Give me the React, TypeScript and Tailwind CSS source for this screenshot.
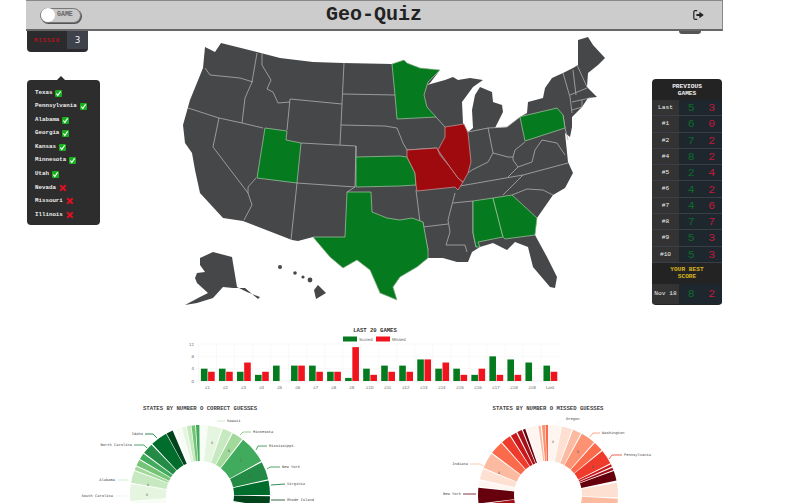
import React from "react";

type Game = { label: string; scored: number; missed: number };

const guesses = [
  { name: "Texas", ok: true },
  { name: "Pennsylvania", ok: true },
  { name: "Alabama", ok: true },
  { name: "Georgia", ok: true },
  { name: "Kansas", ok: true },
  { name: "Minnesota", ok: true },
  { name: "Utah", ok: true },
  { name: "Nevada", ok: false },
  { name: "Missouri", ok: false },
  { name: "Illinois", ok: false },
];

const previous: Game[] = [
  { label: "Last", scored: 5, missed: 3 },
  { label: "#1", scored: 6, missed: 0 },
  { label: "#2", scored: 7, missed: 2 },
  { label: "#4", scored: 8, missed: 2 },
  { label: "#5", scored: 2, missed: 4 },
  { label: "#6", scored: 4, missed: 2 },
  { label: "#7", scored: 4, missed: 6 },
  { label: "#8", scored: 7, missed: 7 },
  { label: "#9", scored: 5, missed: 3 },
  { label: "#10", scored: 5, missed: 3 },
];

const scored = [4, 4, 3, 2, 5, 5, 5, 3, 1, 4, 5, 5, 7, 4, 4, 2, 8, 7, 6, 5];
const missed = [3, 3, 6, 3, 0, 5, 3, 3, 11, 2, 3, 3, 7, 6, 2, 4, 2, 2, 0, 3];

const GREEN = "#067a1e";
const RED = "#9f0a0e";

const utah = "265,128 287,131 286,140 301,143 297,183 257,178";
const texas =
  "347,192 371,192 372,212 387,218 400,220 412,218 423,222 428,250 428,258 417,267 400,277 393,287 397,300 380,293 370,270 357,260 343,268 330,257 313,237 345,237";
const kansas = "356,157 400,156 407,157 415,173 416,185 400,186 356,187";
const missouri = "407,150 437,148 440,155 450,167 458,178 463,182 458,190 455,187 417,191 416,185 415,173 407,157";
const illinois = "445,127 464,124 468,133 471,162 468,173 463,182 458,178 450,167 438,150 445,137";
const minnesota = "392,64 404,60 407,63 420,68 440,70 428,82 424,95 427,107 436,117 397,119 395,95";
const alabama = "473,201 493,198 503,237 478,242 480,247 476,247 473,233";
const georgia = "493,198 512,195 537,218 535,235 505,239 503,237";
const pennsylvania = "520,117 523,116 557,108 563,115 565,128 525,141";

const usa =
  "221,43 257,52 280,58 313,62 343,63 392,64 404,60 407,63 420,68 440,70 430,83 427,85 445,80 453,77 458,80 470,78 483,80 473,87 462,102 463,123 468,132 473,128 472,110 475,95 480,87 492,92 493,102 502,105 503,112 498,122 495,128 507,127 520,117 527,113 528,102 543,98 545,88 552,78 563,73 573,68 578,65 578,40 588,37 593,45 605,58 598,65 588,73 587,87 597,97 588,98 582,107 572,117 572,127 570,137 565,133 568,162 573,173 565,188 553,195 537,218 535,235 547,257 557,277 555,288 550,287 533,267 528,247 515,242 507,250 493,243 480,247 472,252 468,262 457,262 443,258 428,258 417,267 400,277 393,287 397,300 380,293 370,270 357,260 343,268 330,257 313,237 298,241 292,240 243,221 223,218 200,193 195,170 192,153 185,143 183,125 190,100 203,68 205,47 215,52";

const lines = [
  "205,68 210,75 240,78 253,82",
  "257,53 252,82 245,98 242,123",
  "188,108 219,118 242,123 263,128",
  "219,118 213,147 248,193 252,205 244,220",
  "256,178 248,187 248,193",
  "297,183 291,240",
  "301,143 356,146 355,187 297,183",
  "355,187 347,192",
  "262,53 262,65 271,80 267,89 273,92 278,103 290,102",
  "290,99 342,104",
  "344,63 342,104 340,145",
  "290,99 287,130",
  "343,94 395,95",
  "341,125 385,126 397,128 403,143 407,150 410,156",
  "356,146 356,157",
  "416,190 420,222",
  "436,117 445,127",
  "407,150 437,148",
  "423,227 448,224",
  "455,193 448,220 450,232 446,245 465,245 467,252",
  "453,203 473,201 473,233 476,247",
  "423,222 423,227 428,250",
  "460,186 523,175 568,163",
  "503,195 523,175",
  "512,195 527,189 543,190 553,195",
  "468,173 472,170 488,162 493,153 508,157 513,157",
  "508,177 518,167 513,160 513,157 515,150 525,142",
  "518,167 532,162 535,150 542,140 557,143 565,155",
  "488,128 493,153",
  "468,132 488,128 507,127",
  "507,127 520,117",
  "563,115 565,128 568,140",
  "563,73 570,97 572,113",
  "573,70 576,95",
  "577,65 587,87",
  "570,95 587,88",
  "572,102 590,98",
  "582,100 582,107",
  "572,110 582,107",
];

const alaska =
  "200,258 213,252 232,257 237,287 247,292 260,297 258,299 245,288 233,288 223,287 213,298 197,303 185,305 200,297 208,293 197,283 195,278 197,273 205,272 200,265";

const greenLeft = [
  [0, 6, "#f7fcf5"], [6.5, 18, "#e5f5e0"], [19, 27, "#c7e9c0"], [28, 37, "#a1d99b"], [38, 61, "#41ab5d"],
  [62, 77, "#238b45"], [78, 90, "#006d2c"], [91, 100, "#00441b"], [101, 130, "#e5f5e0"], [230, 264, "#f7fcf5"], [265, 279, "#e5f5e0"],
  [280, 290, "#c7e9c0"], [291, 294, "#a1d99b"], [295, 300, "#74c476"], [301, 306, "#41ab5d"], [307, 316, "#238b45"],
  [317, 331, "#006d2c"], [331.5, 337, "#00441b"], [340, 344.5, "#f7fcf5"], [345, 348.4, "#e5f5e0"], [349, 352.5, "#c7e9c0"],
  [353, 356, "#74c476"], [356.7, 359.5, "#41ab5d"],
] as const;

const redRight = [
  [0, 11, "#fff5f0"], [11.5, 20, "#fee0d2"], [21, 28, "#fcbba1"], [29, 41, "#fc9272"], [42, 50, "#fb6a4a"],
  [51, 63, "#ef3b2c"], [64, 66, "#cb181d"], [67, 69, "#a50f15"], [70, 78, "#67000d"], [80, 92, "#fee0d2"], [93, 130, "#fcbba1"],
  [230, 262, "#a50f15"], [263, 276, "#67000d"], [277, 282, "#fff5f0"], [283, 292, "#fee0d2"], [293, 306, "#fcbba1"],
  [307, 318, "#fb6a4a"], [319, 327, "#ef3b2c"], [328, 333, "#cb181d"], [334, 338, "#a50f15"], [339, 341, "#67000d"],
  [342, 351, "#fff5f0"], [352, 354, "#fcbba1"], [355, 357.5, "#fc9272"], [358, 360, "#fb6a4a"],
] as const;

function slice(cx: number, cy: number, a0: number, a1: number) {
  const p = (r: number, a: number) => {
    const t = (a * Math.PI) / 180;
    return `${(cx + r * Math.sin(t)).toFixed(2)} ${(cy - r * Math.cos(t)).toFixed(2)}`;
  };
  const big = a1 - a0 > 180 ? 1 : 0;
  return `M${p(70, a0)}A70 70 0 ${big} 1 ${p(70, a1)}L${p(34, a1)}A34 34 0 ${big} 0 ${p(34, a0)}Z`;
}

type Label = { text: string; x: number; y: number; anchor?: "start" | "end"; line: string; color: string };
type Count = { n: number; x: number; y: number };

const greenLabels: Label[] = [
  { text: "Hawaii", x: 227, y: 422, line: "217,421 225,421", color: "#c7e9c0" },
  { text: "Minnesota", x: 253, y: 433, line: "240,435 243,432 251,432", color: "#74c476" },
  { text: "Mississippi", x: 269, y: 447, line: "256,450 258,446 267,446", color: "#238b45" },
  { text: "New York", x: 282, y: 468, line: "267,469 270,467 280,467", color: "#238b45" },
  { text: "Virginia", x: 287, y: 485, line: "271,485 285,484", color: "#006d2c" },
  { text: "Rhode Island", x: 287, y: 501, line: "271,500 285,500", color: "#00441b" },
  { text: "Idaho", x: 143, y: 435, anchor: "end", line: "145,434 153,434 157,438", color: "#006d2c" },
  { text: "North Carolina", x: 132, y: 446, anchor: "end", line: "134,445 144,445 147,448", color: "#238b45" },
  { text: "Alabama", x: 115, y: 481, anchor: "end", line: "118,480 128,480", color: "#c7e9c0" },
  { text: "South Carolina", x: 113, y: 497, anchor: "end", line: "116,496 127,496", color: "#e5f5e0" },
];

const redLabels: Label[] = [
  { text: "Oregon", x: 566, y: 420, line: "556,424 564,420", color: "#fff5f0" },
  { text: "Washington", x: 602, y: 434, line: "590,437 593,433 600,433", color: "#fc9272" },
  { text: "Pennsylvania", x: 624, y: 456, line: "609,459 612,455 622,455", color: "#ef3b2c" },
  { text: "Indiana", x: 468, y: 465, anchor: "end", line: "470,464 480,464 483,466", color: "#fcbba1" },
  { text: "New York", x: 461, y: 495, anchor: "end", line: "463,494 476,494", color: "#67000d" },
];

const greenCounts: Count[] = [
  { n: 3, x: 212, y: 444 },
  { n: 5, x: 229, y: 452 },
  { n: 7, x: 241, y: 462 },
  { n: 8, x: 250, y: 477 },
  { n: 4, x: 148, y: 486 },
  { n: 3, x: 147, y: 496 },
];

const redCounts: Count[] = [
  { n: 3, x: 553, y: 443 },
  { n: 5, x: 578, y: 453 },
  { n: 6, x: 593, y: 468 },
  { n: 4, x: 499, y: 474 },
];

function Donut({
  x0,
  cx,
  slices,
  labels,
  counts,
}: {
  x0: number;
  cx: number;
  slices: readonly (readonly [number, number, string])[];
  labels: Label[];
  counts: Count[];
}) {
  return (
    <svg viewBox={`${x0} 414 348 89`} className="w-[348px] h-[89px] block" textRendering="geometricPrecision">
      {slices.map(([a, b, color]) => (
        <path key={a} d={slice(cx, 495, a, b)} fill={color} />
      ))}
      {counts.map((c) => (
        <text key={c.x} x={c.x} y={c.y} fontSize="3.8" textAnchor="middle" fill="#555">
          {c.n}
        </text>
      ))}
      {labels.map((l) => (
        <g key={l.text}>
          <polyline points={l.line} fill="none" stroke={l.color} strokeWidth="0.8" />
          <text x={l.x} y={l.y} textAnchor={l.anchor ?? "start"} fontSize="3.75" fill="#444">
            {l.text}
          </text>
        </g>
      ))}
    </svg>
  );
}

const BarChart = () => (
  <svg
    viewBox="180 336 390 58"
    className="w-[390px] h-[58px] block [font-family:'Liberation_Sans',sans-serif]"
    textRendering="geometricPrecision"
  >
    <rect x="343" y="336.5" width="14" height="5" fill={GREEN} />
    <text x="359" y="340.5" fontSize="4.3" fill="#666">Scored</text>
    <rect x="376" y="336.5" width="14" height="5" fill="#f0141e" />
    <text x="392" y="340.5" fontSize="4.3" fill="#666">Missed</text>
    {[344, 356.3, 368.7, 381].map((y, i) => (
      <g key={y}>
        <line x1="196" x2="560" y1={y} y2={y} stroke={i === 3 ? "#ddd" : "#f0f0f0"} strokeWidth="0.5" />
        <text x="194" y={y + 1.5} fontSize="4.4" textAnchor="end" fill="#666">{12 - i * 4}</text>
      </g>
    ))}
    {scored.map((s, i) => {
      const x = 198.5 + i * 18.03;
      const m = missed[i];
      return (
        <g key={i}>
          <line x1={x} x2={x} y1="344" y2="383" stroke="#f3f3f3" strokeWidth="0.5" />
          <rect x={x + 2.4} y={381 - s * 3.08} width="6.6" height={s * 3.08} fill={GREEN} />
          <rect x={x + 9.6} y={381 - m * 3.08} width="6.6" height={m * 3.08} fill="#f0141e" />
          <text x={x + 9} y="388.5" fontSize="4.4" textAnchor="middle" fill="#666">
            {i === 19 ? "Last" : `#${i + 1}`}
          </text>
        </g>
      );
    })}
  </svg>
);

const UsaMap = () => (
  <svg viewBox="180 35 430 270" className="w-[430px] h-[270px] block shrink-0">
    <polygon points={usa} fill="#464749" />
    <polygon points={alaska} fill="#464749" />
    <polygon points="318,285 326,293 316,299 314,290" fill="#464749" />
    <circle cx="280" cy="267" r="2" fill="#464749" />
    <circle cx="295" cy="273" r="1.8" fill="#464749" />
    <circle cx="303" cy="277" r="1.6" fill="#464749" />
    <circle cx="310" cy="280" r="2.4" fill="#464749" />
    <g fill="none" stroke="#aeaeae" strokeWidth="0.8">
      {lines.map((l) => (
        <polyline key={l} points={l} />
      ))}
    </g>
    <g stroke="#a9c7a9" strokeWidth="0.7">
      {[utah, texas, kansas, minnesota, alabama, georgia, pennsylvania].map((p) => (
        <polygon key={p} points={p} fill={GREEN} />
      ))}
    </g>
    <g stroke="#c9a0a0" strokeWidth="0.7">
      {[missouri, illinois].map((p) => (
        <polygon key={p} points={p} fill={RED} />
      ))}
    </g>
  </svg>
);

const SignOut = () => (
  <svg viewBox="0 0 11 10" className="w-[11px] h-[10px] shrink-0">
    <path d="M4.2 .7H2a1.2 1.2 0 0 0-1.2 1.2v6.2A1.2 1.2 0 0 0 2 9.3h2.2" fill="none" stroke="#222" strokeWidth="1.2" />
    <path d="M3.4 3.9h3V1.8L10.8 5 6.4 8.2V6.1h-3z" fill="#222" />
  </svg>
);

const Mark = ({ ok }: { ok: boolean }) =>
  ok ? (
    <span className="w-[7px] h-[7px] rounded-[1px] bg-[#17b01d] flex items-center justify-center">
      <svg viewBox="0 0 10 10" className="w-[7px] h-[7px]">
        <path d="M2 5l2 3 4-6" fill="none" stroke="#fff" strokeWidth="1.6" />
      </svg>
    </span>
  ) : (
    <svg viewBox="0 0 10 10" className="w-[8px] h-[8px]">
      <path d="M1.5 1.5l7 7M8.5 1.5l-7 7" stroke="#e01020" strokeWidth="2.4" />
    </svg>
  );

const ScoreRow = ({ label, scored, missed, last }: Game & { last?: boolean }) => (
  <div className={`flex ${last ? "h-[20px]" : "h-[16.3px] border-b border-[#3a3f46]"}`}>
    <div className="w-[27px] bg-[#333333] flex items-center justify-center text-[6.2px] text-[#eee]">{label}</div>
    <div className="flex-1 bg-[#1f272e] flex items-center justify-around pl-[2px] text-[11.5px]">
      <span className="text-[#0b6b2a]">{scored}</span>
      <span className="text-[#c01a3a]">{missed}</span>
    </div>
  </div>
);

export default function App() {
  return (
    <div className="w-[800px] h-[503px] overflow-hidden bg-white [font-family:'Liberation_Mono',monospace]">
      <header className="relative z-10 ml-[26px] w-[697px] h-[31px] bg-[#cccccc] border-t border-r border-[#888] border-b-2 border-b-[#666] flex items-center pl-[14px] pr-[18px]">
        <div className="w-[41px] h-[15px] rounded-full bg-[#c9c9c9] border border-[#777] shadow-[1px_1px_0_#555] flex items-center">
          <span className="w-[14px] h-[14px] rounded-full bg-white" />
          <span className="ml-[2px] text-[6.6px] font-bold text-[#666]">GAME</span>
        </div>
        <h1 className="flex-1 text-center text-[20px] leading-none font-bold text-[#222] pr-[26px]">Geo-Quiz</h1>
        <SignOut />
        <div className="absolute -bottom-[5px] right-[21px] w-[22px] h-[3px] rounded-b-[11px] bg-[#555]" />
      </header>

      <div className="flex pl-[27px]">
        <div className="w-[73px] shrink-0">
          <div className="w-[61px] h-[21px] rounded-b-[4px] bg-[#2b2b2d] flex items-center justify-between pl-[7px]">
            <span className="text-[5.6px] font-bold tracking-[1px] text-[#b3121d]">MISSED</span>
            <span className="w-[21px] h-[18px] mt-[-3px] bg-[#3e424b] text-white text-[9px] flex items-center justify-center [font-family:'Noto_Sans',sans-serif]">3</span>
          </div>
          <div className="relative mt-[28px] h-[145px] rounded-[4px] bg-[#2d2d2d] pt-[6.5px] pl-[8px]">
            <span className="absolute -top-[4px] left-[30px] w-0 h-0 border-x-[4px] border-x-transparent border-b-[4px] border-b-[#2d2d2d]" />
            {guesses.map((g) => (
              <div key={g.name} className="h-[13.52px] flex items-center gap-[3px] text-[5.8px] font-bold text-[#eee]">
                <span>{g.name}</span>
                <Mark ok={g.ok} />
              </div>
            ))}
          </div>
        </div>

        <div className="ml-[80px] mt-[4px]">
          <UsaMap />
        </div>

        <aside className="ml-[42px] mt-[48px] w-[70px] h-[226px] rounded-[4px] overflow-hidden bg-[#232323] flex flex-col">
          <div className="h-[21px] flex items-center justify-center text-center text-[6.2px] leading-[7px] font-bold text-[#eee]">PREVIOUS<br />GAMES</div>
          {previous.map((g) => (
            <ScoreRow key={g.label} {...g} />
          ))}
          <div className="h-[21px] flex items-center justify-center text-center text-[6.2px] leading-[7px] font-bold text-[#d9b51c]">YOUR BEST<br />SCORE</div>
          <ScoreRow label="Nov 18" scored={8} missed={2} last />
        </aside>
      </div>

      <section className="ml-[180px] mt-[20px] w-[390px]">
        <h2 className="h-[11px] text-center text-[5.6px] leading-[11px] font-bold text-[#333]">LAST 20 GAMES</h2>
        <BarChart />
      </section>

      <div className="flex pl-[26px] mt-[9px]">
        <section className="w-[348px]">
          <h2 className="h-[11px] text-center text-[5.6px] leading-[11px] font-bold text-[#444]">STATES BY NUMBER O CORRECT GUESSES</h2>
          <Donut x0={26} cx={200} slices={greenLeft} labels={greenLabels} counts={greenCounts} />
        </section>
        <section className="w-[348px]">
          <h2 className="h-[11px] text-center text-[5.6px] leading-[11px] font-bold text-[#444]">STATES BY NUMBER O MISSED GUESSES</h2>
          <Donut x0={374} cx={548} slices={redRight} labels={redLabels} counts={redCounts} />
        </section>
      </div>
    </div>
  );
}
